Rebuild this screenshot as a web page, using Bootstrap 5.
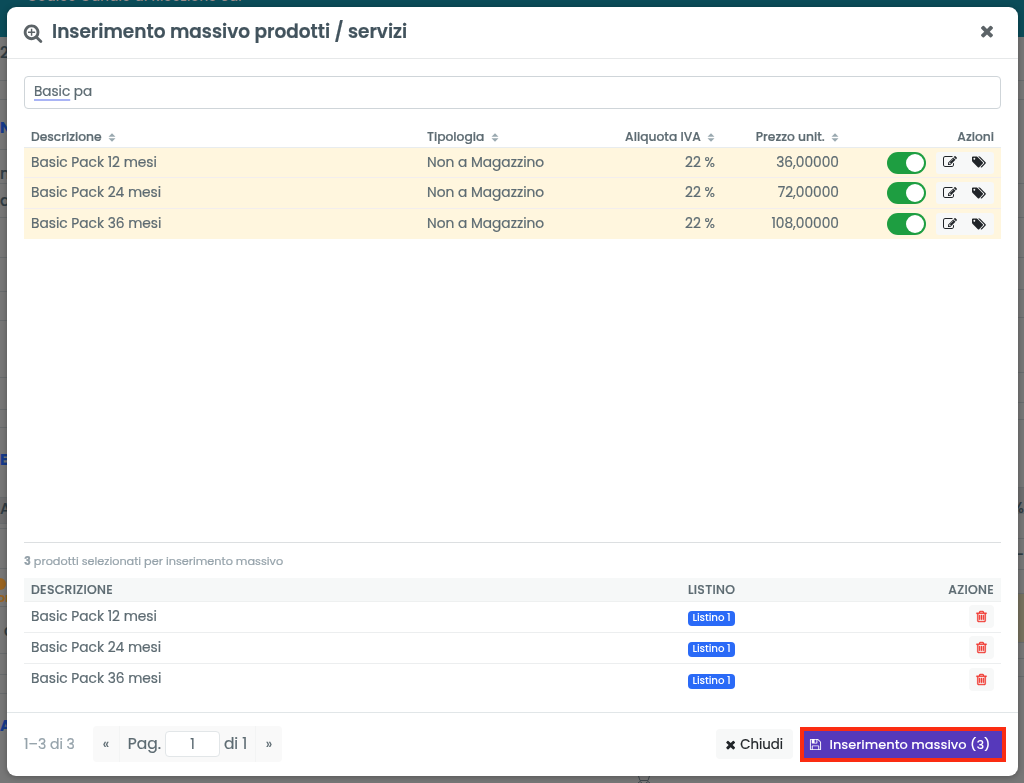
<!DOCTYPE html>
<html lang="it">
<head>
    <meta charset="UTF-8">
    <meta name="viewport" content="width=device-width, initial-scale=1.0">
    <title>Inserimento massivo prodotti / servizi</title>
    <link href="https://cdn.jsdelivr.net/npm/bootstrap@5.3.3/dist/css/bootstrap.min.css" rel="stylesheet">
    <style>
        body {
            font-family: Poppins, Inter, "Liberation Sans", sans-serif;
            font-feature-settings: "cv11", "ss03";
            font-size: 13.75px;
            color: #5d6b72;
            background: #777;
            height: 783px;
            overflow: hidden;
            -webkit-text-stroke: .2px currentColor;
        }
        .ico {
            display: block;
            width: 1em;
            height: 1em;
            fill: currentColor;
            flex: none;
        }

        /* page behind the dialog */
        .topbar {
            height: 37px;
            background: #0b4c59;
            color: #9a8a8a;
            font-size: 13.3px;
            line-height: 14px;
            padding-left: 27px;
        }
        .topbar span { display: block; margin-top: -10px; letter-spacing: .35px; }
        .strip { width: 20px; color: #2f3b42; font-size: 15px; font-weight: 500; white-space: nowrap; overflow: hidden; }
        .strip > div { border-bottom: 1px solid #686b6d; display: flex; align-items: center; line-height: 1; }
        .strip-left { grid-template-rows: 44px 19px 50px 34px 34px 40px 34px 29px 57px 32px 18px 70px 26px 5px 40px 38px 47px 21px 19px 90px; }
        .strip-right { grid-template-rows: 44px 19px 84px 34px 40px 32px 28px 55px 30px 17px 68px 26px 25px 31px 24px 49px 16px 18px 107px; }
        .strip-right > div { justify-content: flex-end; }
        .strip .band { background: #6e6e6f; }
        .strip-left .band { padding-bottom: 5px; }
        .strip-right .band { padding-top: 14px; }
        .strip .band-warm { background: #77725f; }
        .link-dark-blue { color: #153a8c; font-weight: 700; }
        .link-up { padding-bottom: 6px; }
        .link-down { padding-top: 6px; }
        .text-down { padding-top: 13px; }
        .warn-text { color: #9a6420; font-weight: 600; font-size: 13px; }
        .warn-text i { display: block; width: 12px; height: 12px; border-radius: 50%; background: #9a6420; margin: 0 0 1px -6px; }
        .warn-text span { padding-bottom: 2px; margin-left: -3px; }
        .peek { right: 373px; bottom: 0; width: 14px; height: 7px; stroke: #40484d; fill: none; }

        /* dialog */
        .modal-dialog { margin: 7px 6px 7px 7px; max-width: none; height: 769px; }
        .modal-content { height: 769px; border: 0; border-radius: 9px; box-shadow: 0 1px 6px rgba(0, 0, 0, .3); color: inherit; }
        .modal-header { height: 52px; padding: 0 24px 2px 16px; border-color: #e6e8e9; }
        .modal-header h5 { font-size: 18.5px; font-weight: 600; color: #42535d; margin-left: 9px; }
        .modal-header .ico { font-size: 20px; color: #5c6367; margin-top: 2px; }
        .modal-header .ico-close { font-size: 18px; margin: 0 -2px 2px 0; }
        .modal-body { padding: 17px 17px 0; display: flex; flex-direction: column; overflow: hidden; }
        .search-box { height: 33px; padding: 0 9px; border: 1px solid #cfd5d9; border-radius: 4px; display: flex; align-items: center; }
        .search-box span { font-size: 13.6px; }
        .search-box u { text-decoration-color: #a9b4f5; text-decoration-thickness: 2px; text-underline-offset: 3px; }
        .table { table-layout: fixed; margin: 0; --bs-table-color: #5d6b72; --bs-table-bg: transparent; }
        .table > :not(caption) > * > * { padding: 0 7px; vertical-align: middle; color: #5d6b72; line-height: 18px; }
        .products { margin-top: 18px; }
        .products thead th { height: 20px; font-size: 12.3px; font-weight: 500; border-color: #e8ecee; }
        .table.products > tbody > tr > td { height: 30.6px; background: #fff6de; border-color: #f3eeee; padding-top: 1px; }
        .products tbody tr:last-child td { border: 0; }
        .sorter { display: inline-block; width: 8px; height: 9px; fill: #9aa9b0; margin-left: 3px; vertical-align: -1px; }
        .form-switch .form-check-input { width: 39px; height: 22px; margin: 0 2px 0 0; border: 0; border-radius: 11px; background-color: #1e9e41; background-image: none; padding: 2px; display: flex; justify-content: flex-end; }
        .form-switch .form-check-input::after { content: ""; width: 18px; height: 18px; border-radius: 50%; background: #fff; }
        .row-tools { width: 58px; height: 22px; background: #f7f8f8; border-radius: 3px; color: #212529; font-size: 14px; padding: 0 1px 1px 0; }
        .picked { border-top: 1px solid #dcdfe1; height: 170px; }
        .picked p { margin: 9px 0 7px; font-size: 11.27px; line-height: 19px; color: #95a2aa; }
        .table > thead.picked-head > tr > th { height: 23px; background: #f6f8f8; font-size: 12.4px; letter-spacing: .3px; font-weight: 500; border-color: #eef0f0; padding-top: 1px; }
        .picked tbody td { height: 31.3px; border-color: #eceeef; }
        .picked tbody tr:last-child td { border: 0; }
        .picked .badge { background: #2a6af7; font-size: 10.3px; font-weight: 500; line-height: 14px; padding: 0 4px 1px; border-radius: 4px; width: 47px; display: block; margin-top: 4px; letter-spacing: -.1px; -webkit-text-stroke: 0; }
        .trash { width: 25px; height: 23px; margin-left: auto; background: #f7f8f8; border-radius: 4px; color: #f0332b; font-size: 13px; stroke: #f0332b; stroke-width: 50px; padding-right: 1px; }
        .modal-footer { height: 64px; padding: 0 12px 1px 17px; border-color: #e1e6e8; gap: 0; flex-wrap: nowrap; }
        .modal-footer > * { margin: 0; }
        .count-text { width: 69px; color: #95a2aa; font-size: 14px; padding-top: 1px; }
        .pager { height: 36px; background: #f9f9f9; border-radius: 4px; font-size: 15.5px; }
        .pager > span { height: 36px; display: flex; align-items: center; justify-content: center; }
        .pager .arrow { width: 26px; font-size: 14px; }
        .pager .middle { width: 137px; border: solid #f3f4f4; border-width: 0 1px; gap: 4px; }
        .page-num { width: 55px; height: 26px; background: #fff; border: 1px solid #e2e6e8; border-radius: 4px; text-align: center; line-height: 24px; font-size: 14px; }
        .btn-chiudi { width: 77px; height: 30px; background: #f7f8f8; border-radius: 4px; color: #212529; gap: 3px; font-size: 13.3px; padding: 1px 2px 0 0; }
        .btn-massivo { width: 206px; height: 35px; margin-left: 7px; background: #5639bb; border: 4px solid #fb2c12; color: #fff; gap: 7px; font-weight: 500; font-size: 13px; padding: 1px 6px 0 0; -webkit-text-stroke: 0; }
    </style>
</head>
<body>
    <svg class="d-none">
        <symbol id="i-zoom" viewBox="0 0 1792 1792"><path d="M1088 800v64q0 13-9.500 22.500t-22.500 9.500h-224v224q0 13-9.500 22.500t-22.500 9.500h-64q-13 0-22.500-9.500t-9.500-22.500v-224h-224q-13 0-22.500-9.500t-9.500-22.500v-64q0-13 9.500-22.500t22.500-9.500h224v-224q0-13 9.500-22.500t22.500-9.500h64q13 0 22.500 9.500t9.500 22.500v224h224q13 0 22.500 9.500t9.500 22.500zm128 32q0-185-131.500-316.500t-316.500-131.500-316.500 131.500-131.500 316.500 131.500 316.500 316.500 131.500 316.500-131.500 131.500-316.500zm512 832q0 53-37.500 90.500t-90.500 37.500q-54 0-90-38l-343-342q-179 124-399 124-143 0-273.500-55.500t-225-150-150-225-55.500-273.500 55.500-273.500 150-225 225-150 273.500-55.500 273.500 55.500 225 150 150 225 55.500 273.500q0 220-124 399l343 343q37 37 37 90z"/></symbol>
        <symbol id="i-times" viewBox="0 0 1792 1792"><path d="M1490 1322q0 40-28 68l-136 136q-28 28-68 28t-68-28l-294-294-294 294q-28 28-68 28t-68-28l-136-136q-28-28-28-68t28-68l294-294-294-294q-28-28-28-68t28-68l136-136q28-28 68-28t68 28l294 294 294-294q28-28 68-28t68 28l136 136q28 28 28 68t-28 68l-294 294 294 294q28 28 28 68z"/></symbol>
        <symbol id="i-edit" viewBox="0 0 1792 1792"><path d="M888 1184l116-116-152-152-116 116v56h96v96h56zm440-720q-16-16-33 1l-350 350q-17 17-1 33t33-1l350-350q17-17 1-33zm80 594v190q0 119-84.500 203.500t-203.500 84.500h-832q-119 0-203.500-84.500t-84.500-203.500v-832q0-119 84.500-203.500t203.500-84.500h832q63 0 117 25 15 7 18 23 3 17-9 29l-49 49q-14 14-32 8-23-6-45-6h-832q-66 0-113 47t-47 113v832q0 66 47 113t113 47h832q66 0 113-47t47-113v-126q0-13 9-22l64-64q15-15 35-7t20 29zm-96-738l288 288-672 672h-288v-288zm444 132l-92 92-288-288 92-92q28-28 68-28t68 28l152 152q28 28 28 68t-28 68z"/></symbol>
        <symbol id="i-tags" viewBox="0 0 1920 1792"><path d="M448 448q0-53-37.500-90.500t-90.500-37.500-90.500 37.500-37.500 90.500 37.500 90.500 90.500 37.500 90.500-37.500 37.500-90.500zm1067 576q0 53-37 90l-491 492q-39 37-91 37-53 0-90-37l-715-716q-38-37-64.500-101t-26.500-117v-416q0-52 38-90t90-38h416q53 0 117 26.500t102 64.500l715 714q37 39 37 91zm384 0q0 53-37 90l-491 492q-39 37-91 37-36 0-59-14t-53-45l470-470q37-37 37-90 0-52-37-91l-715-714q-38-38-102-64.500t-117-26.500h224q53 0 117 26.500t102 64.500l715 714q37 39 37 91z"/></symbol>
        <symbol id="i-trash" viewBox="0 0 1792 1792"><path d="M704 736v576q0 14-9 23t-23 9h-64q-14 0-23-9t-9-23v-576q0-14 9-23t23-9h64q14 0 23 9t9 23zm256 0v576q0 14-9 23t-23 9h-64q-14 0-23-9t-9-23v-576q0-14 9-23t23-9h64q14 0 23 9t9 23zm256 0v576q0 14-9 23t-23 9h-64q-14 0-23-9t-9-23v-576q0-14 9-23t23-9h64q14 0 23 9t9 23zm128 724v-948h-896v948q0 22 7 40.500t14.500 27 10.500 8.500h832q3 0 10.500-8.500t14.500-27 7-40.500zm-672-1076h448l-48-117q-7-9-17-11h-317q-10 2-17 11zm928 32v64q0 14-9 23t-23 9h-96v948q0 83-47 143.500t-113 60.500h-832q-66 0-113-58.500t-47-141.500v-952h-96q-14 0-23-9t-9-23v-64q0-14 9-23t23-9h309l70-167q15-37 54-63t79-26h320q40 0 79 26t54 63l70 167h309q14 0 23 9t9 23z"/></symbol>
        <symbol id="i-save" viewBox="0 0 1792 1792"><path d="M512 1536h768v-384h-768v384zm896 0h128v-896q0-14-10-38.500t-20-34.500l-281-281q-10-10-34-20t-39-10v416q0 40-28 68t-68 28h-576q-40 0-68-28t-28-68v-416h-128v1280h128v-416q0-40 28-68t68-28h832q40 0 68 28t28 68v416zm-384-928v-320q0-13-9.500-22.500t-22.500-9.500h-192q-13 0-22.500 9.500t-9.500 22.500v320q0 13 9.500 22.500t22.500 9.500h192q13 0 22.500-9.500t9.500-22.500zm640 32v928q0 40-28 68t-68 28h-1344q-40 0-68-28t-28-68v-1344q0-40 28-68t68-28h928q40 0 88 20t76 48l280 280q28 28 48 76t20 88z"/></symbol>
        <symbol id="i-sort" viewBox="0 0 8 9"><path d="M4 .3 7.500 3.800H.500zM.500 5.200h7L4 8.700z"/></symbol>
    </svg>

    <div class="topbar overflow-hidden"><span>Codice Canale di Ricezione Sdi</span></div>
    <div class="d-flex justify-content-between">
        <div class="strip strip-left d-grid">
            <div class="align-items-start pt-1"><span class="pt-1">2</span></div>
            <div></div>
            <div><span class="link-dark-blue link-down ms-n1">N</span></div>
            <div><span class="text-down">n</span></div>
            <div><span>a</span></div>
            <div></div>
            <div></div>
            <div></div>
            <div></div>
            <div></div>
            <div></div>
            <div><span class="link-dark-blue link-up">E</span></div>
            <div class="band"><span>A</span></div>
            <div></div>
            <div></div>
            <div class="warn-text flex-column align-items-start justify-content-end"><i></i><span>or</span></div>
            <div><span class="ps-1">c</span></div>
            <div></div>
            <div></div>
            <div class="align-items-start"><span class="link-dark-blue pt-4">A</span></div>
        </div>
        <div class="strip strip-right d-grid">
            <div></div>
            <div></div>
            <div></div>
            <div></div>
            <div></div>
            <div></div>
            <div></div>
            <div></div>
            <div></div>
            <div></div>
            <div></div>
            <div class="band"><span>%</span></div>
            <div></div>
            <div><span>-</span></div>
            <div></div>
            <div class="band-warm"></div>
            <div></div>
            <div></div>
            <div></div>
        </div>
    </div>
    <svg class="peek position-absolute" viewBox="0 0 14 7"><path d="M1.500 0 3 4.500M12.500 0 11 4.500M3 4.500h8M1 7q2-3 4 0M9 7q2-3 4 0"/></svg>

    <div class="modal d-block overflow-hidden" tabindex="-1">
        <div class="modal-dialog">
            <div class="modal-content">
                <div class="modal-header">
                    <div class="d-flex align-items-center">
                        <svg class="ico"><use href="#i-zoom"/></svg>
                        <h5 class="modal-title text-nowrap">Inserimento massivo prodotti / servizi</h5>
                    </div>
                    <svg class="ico ico-close"><use href="#i-times"/></svg>
                </div>
                <div class="modal-body">
                    <div class="search-box"><span><u>Basic</u> pa</span></div>
                    <table class="table products">
                        <colgroup>
                            <col width="396"><col width="162"><col width="140"><col width="124"><col width="155">
                        </colgroup>
                        <thead>
                            <tr>
                                <th>Descrizione <svg class="sorter"><use href="#i-sort"/></svg></th>
                                <th>Tipologia <svg class="sorter"><use href="#i-sort"/></svg></th>
                                <th class="text-end">Aliquota IVA <svg class="sorter"><use href="#i-sort"/></svg></th>
                                <th class="text-end">Prezzo unit. <svg class="sorter"><use href="#i-sort"/></svg></th>
                                <th class="text-end">Azioni</th>
                            </tr>
                        </thead>
                        <tbody>
                            <tr>
                                <td>Basic Pack 12 mesi</td>
                                <td>Non a Magazzino</td>
                                <td class="text-end">22 %</td>
                                <td class="text-end">36,00000</td>
                                <td>
                                    <div class="d-flex justify-content-end align-items-center form-switch p-0">
                                        <span class="form-check-input"></span>
                                        <div class="row-tools d-flex justify-content-around align-items-center ms-2">
                                            <svg class="ico"><use href="#i-edit"/></svg>
                                            <svg class="ico"><use href="#i-tags"/></svg>
                                        </div>
                                    </div>
                                </td>
                            </tr>
                            <tr>
                                <td>Basic Pack 24 mesi</td>
                                <td>Non a Magazzino</td>
                                <td class="text-end">22 %</td>
                                <td class="text-end">72,00000</td>
                                <td>
                                    <div class="d-flex justify-content-end align-items-center form-switch p-0">
                                        <span class="form-check-input"></span>
                                        <div class="row-tools d-flex justify-content-around align-items-center ms-2">
                                            <svg class="ico"><use href="#i-edit"/></svg>
                                            <svg class="ico"><use href="#i-tags"/></svg>
                                        </div>
                                    </div>
                                </td>
                            </tr>
                            <tr>
                                <td>Basic Pack 36 mesi</td>
                                <td>Non a Magazzino</td>
                                <td class="text-end">22 %</td>
                                <td class="text-end">108,00000</td>
                                <td>
                                    <div class="d-flex justify-content-end align-items-center form-switch p-0">
                                        <span class="form-check-input"></span>
                                        <div class="row-tools d-flex justify-content-around align-items-center ms-2">
                                            <svg class="ico"><use href="#i-edit"/></svg>
                                            <svg class="ico"><use href="#i-tags"/></svg>
                                        </div>
                                    </div>
                                </td>
                            </tr>
                        </tbody>
                    </table>
                    <div class="picked mt-auto">
                        <p><b>3</b> prodotti selezionati per inserimento massivo</p>
                        <table class="table">
                            <colgroup>
                                <col width="657"><col width="160"><col width="160">
                            </colgroup>
                            <thead class="picked-head">
                                <tr>
                                    <th>DESCRIZIONE</th>
                                    <th>LISTINO</th>
                                    <th class="text-end">AZIONE</th>
                                </tr>
                            </thead>
                            <tbody>
                                <tr>
                                    <td>Basic Pack 12 mesi</td>
                                    <td><span class="badge">Listino 1</span></td>
                                    <td><div class="trash d-flex align-items-center justify-content-center"><svg class="ico"><use href="#i-trash"/></svg></div></td>
                                </tr>
                                <tr>
                                    <td>Basic Pack 24 mesi</td>
                                    <td><span class="badge">Listino 1</span></td>
                                    <td><div class="trash d-flex align-items-center justify-content-center"><svg class="ico"><use href="#i-trash"/></svg></div></td>
                                </tr>
                                <tr>
                                    <td>Basic Pack 36 mesi</td>
                                    <td><span class="badge">Listino 1</span></td>
                                    <td><div class="trash d-flex align-items-center justify-content-center"><svg class="ico"><use href="#i-trash"/></svg></div></td>
                                </tr>
                            </tbody>
                        </table>
                    </div>
                </div>
                <div class="modal-footer">
                    <span class="count-text text-nowrap">1–3 di 3</span>
                    <div class="pager d-flex me-auto">
                        <span class="arrow">«</span>
                        <span class="middle">Pag. <span class="page-num">1</span> di 1</span>
                        <span class="arrow">»</span>
                    </div>
                    <div class="btn-chiudi d-flex align-items-center justify-content-center">
                        <svg class="ico"><use href="#i-times"/></svg>Chiudi
                    </div>
                    <div class="btn-massivo d-flex align-items-center justify-content-center text-nowrap">
                        <svg class="ico"><use href="#i-save"/></svg>Inserimento massivo (3)
                    </div>
                </div>
            </div>
        </div>
    </div>
    <script src="https://cdn.jsdelivr.net/npm/bootstrap@5.3.3/dist/js/bootstrap.bundle.min.js"></script>
</body>
</html>
